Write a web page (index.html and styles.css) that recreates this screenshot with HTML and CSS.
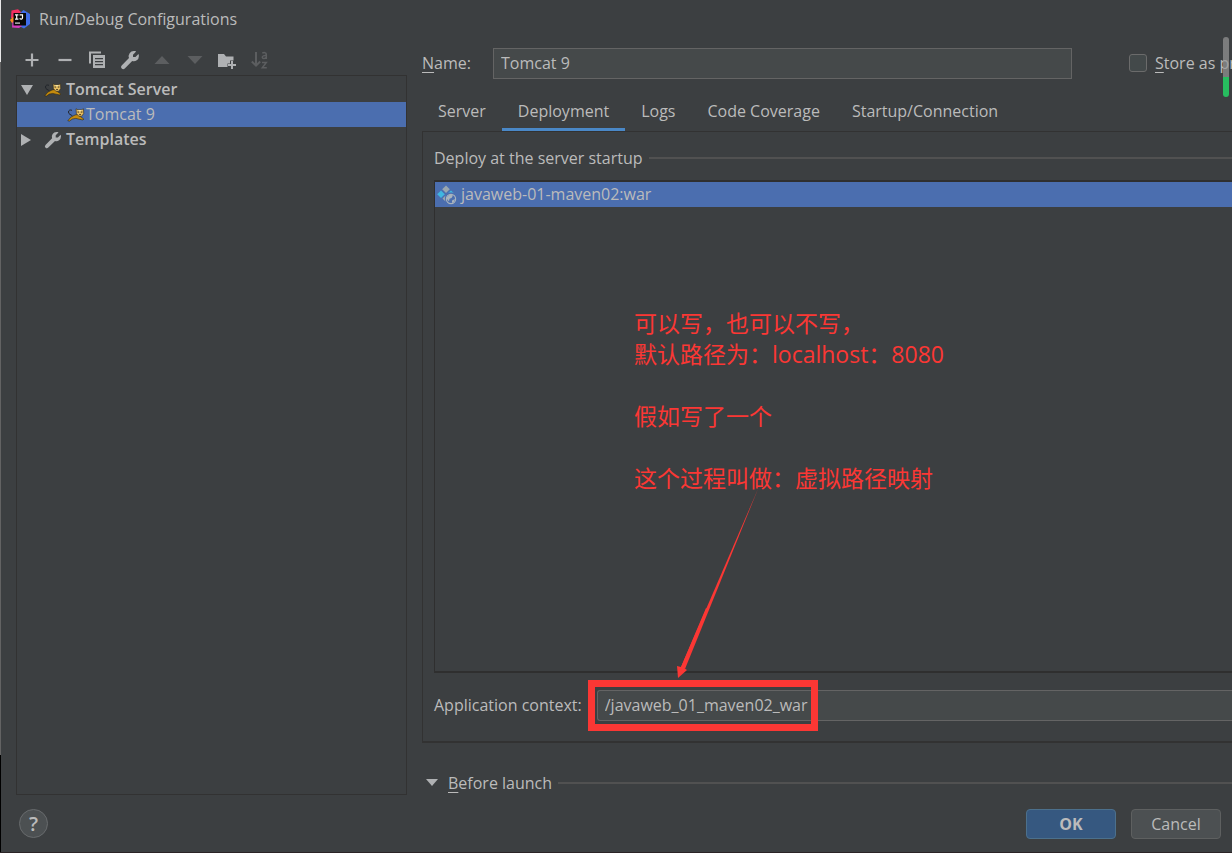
FILE: index.html
```
<!DOCTYPE html>
<html lang="en">
<head>
<meta charset="utf-8">
<title>Run/Debug Configurations</title>
<link rel="stylesheet" href="styles.css">
</head>
<body>
<svg class="defs" aria-hidden="true">
  <symbol id="wrench" viewBox="0 0 18 18">
    <path fill="currentColor" d="M12.500 1c1 0 1.400.1 2 .4L11.700 4.200v2.200h2.200l2.700-2.700c.4.700.4 1.300.4 1.900a4.600 4.600 0 0 1-6 4.300L4.300 16.600a1.900 1.900 0 0 1-2.800-2.700L8.100 7.200A4.600 4.600 0 0 1 12.500 1z"/>
  </symbol>
  <symbol id="cat" viewBox="0 0 18 14">
    <path d="M5.500 8C4 6.500 1.500 6.500 1.500 4 1.600 2.200 3 1.600 5 2.300" fill="none" stroke="#20242a" stroke-width="1"/>
    <path d="M.8 12.800l3-3.600L8 7l2.500-.5L14 9l2.800 2-.8 1-4-.8-3.200-.8-3.500.7-2.800 2z" fill="#c58b0c" stroke="#2f2817" stroke-width=".6"/>
    <path d="M9 .8l2 1h3.500l2-1 .2 4.700-2 2.700h-3L9.400 5.500z" fill="#e5bd60" stroke="#28231a" stroke-width=".6"/>
    <path d="M10.500 3.600h1.600v1h-1.600zM13.800 3.600h1.600v1h-1.600zM12.300 6h1.500v.9h-1.500z" fill="#352918"/>
    <path d="M11.300 2.200h3.200v1h-3.200z" fill="#fff0b4"/>
  </symbol>
</svg>
<div class="dialog">
  <header class="titlebar">
    <svg class="logo" viewBox="0 0 20 20" aria-hidden="true">
      <path d="M1.500 1.500L8 .3 12 4v5H1z" fill="#f52e62"/>
      <path d="M0 11l3-3 3 1v6l-4-1z" fill="#fb8a22"/>
      <path d="M10 4l3.500-3L20 5v10l-6 4.500-4-2z" fill="#3f6de8"/>
      <path d="M2.500 13L8 12l4 5-3 2-7-.5z" fill="#d43bc0"/>
      <path d="M3.500 4h12.500v12.500H3.500z" fill="#080808"/>
      <path d="M5 5.800h3.400M6.700 5.800v4.400M5 10.200h3.400M9.600 5.800h2.900v3c0 1.600-1.800 1.600-2.900.8" fill="none" stroke="#fff" stroke-width="1.200"/>
      <path d="M5 13.500h5v1.200H5z" fill="#ddd"/>
    </svg>
    <h1 class="title">Run/Debug Configurations</h1>
  </header>
  <main class="content">
    <section class="sidebar">
      <div class="toolbar">
        <button class="tool" aria-label="Add"><svg viewBox="0 0 20 20"><path d="M10 3.500v13M3.500 10h13" stroke="currentColor" stroke-width="2.200"/></svg></button>
        <button class="tool" aria-label="Remove"><svg viewBox="0 0 20 20"><path d="M3.500 10h13" stroke="currentColor" stroke-width="2.200"/></svg></button>
        <button class="tool" aria-label="Copy"><svg viewBox="0 0 20 20"><path d="M3 13.500V2.500h11" fill="none" stroke="currentColor" stroke-width="2"/><path fill="currentColor" fill-rule="evenodd" d="M6 5h12v13H6zM8 8v1.200h8V8zM8 11v1.200h8V11zM8 14v1.200h8V14z"/></svg></button>
        <button class="tool" aria-label="Edit templates"><svg viewBox="0 0 18 18"><use href="#wrench"/></svg></button>
        <button class="tool" aria-label="Move up" disabled><svg viewBox="0 0 20 20"><path fill="currentColor" d="M2.500 14L10 6l7.500 8z"/></svg></button>
        <button class="tool" aria-label="Move down" disabled><svg viewBox="0 0 20 20"><path fill="currentColor" d="M2.500 6h15L10 14z"/></svg></button>
        <button class="tool" aria-label="Create folder"><svg viewBox="0 0 20 20"><path fill="currentColor" d="M1 4h6l2 2.500h7.500v4H13v3h-2.500V17H1z"/><path d="M15 11v8M11 15h8" stroke="currentColor" stroke-width="2"/></svg></button>
        <button class="tool" aria-label="Sort configurations" disabled><svg viewBox="0 0 20 20"><path d="M6 2v13M1.800 11.500L6 15.700l4.200-4.200" fill="none" stroke="currentColor" stroke-width="2"/><path d="M12.300 3.200c1.500-1 4-.8 4 1V9M16.300 5.700c-2-.3-4.200.2-4 1.800.2 1.600 3.200 1.300 4-.3M12 12.500h4.300l-4 5.200h4.500" fill="none" stroke="currentColor" stroke-width="1.500"/></svg></button>
      </div>
      <ul class="tree">
        <li class="node group"><svg class="twisty" viewBox="0 0 12 12"><path d="M0 1h12L6 11z" fill="currentColor"/></svg><svg class="cat"><use href="#cat"/></svg>Tomcat Server</li>
        <li class="node leaf"><svg class="cat"><use href="#cat"/></svg>Tomcat 9</li>
        <li class="node group"><svg class="twisty" viewBox="0 0 12 12"><path d="M0 0l10 6-10 6z" fill="currentColor"/></svg><svg class="node-wrench"><use href="#wrench"/></svg>Templates</li>
      </ul>
    </section>
    <section class="settings">
      <div class="name-row">
        <label class="name-label" for="name"><u>N</u>ame:</label>
        <input class="field name-field" id="name" type="text" value="Tomcat 9">
        <div class="store"><input class="check" id="store" type="checkbox"><label for="store"><u>S</u>tore as pr</label></div>
      </div>
      <nav class="tabs">
        <button class="tab">Server</button>
        <button class="tab active">Deployment</button>
        <button class="tab">Logs</button>
        <button class="tab">Code Coverage</button>
        <button class="tab">Startup/Connection</button>
      </nav>
      <div class="panel">
        <div class="heading"><span>Deploy at the server startup</span></div>
        <div class="artifacts">
          <div class="artifact">
            <svg class="artifact-icon" viewBox="0 0 20 20" aria-hidden="true">
              <path d="M9 .5l3.800 3.800L9 8 5.200 4.300z" fill="#9aa7b0"/>
              <path d="M4 5.500l3.800 3.800L4 13 .2 9.300z" fill="#40b6e0"/>
              <path d="M11 8l3-2.500L16.800 8c-2-.6-4-.6-5.800 0z" fill="#40b6e0"/>
              <path d="M8.500 10.500L5.500 13.500l3 3c-.7-2-.7-4 0-6z" fill="#9aa7b0"/>
              <circle cx="14" cy="14" r="4.600" fill="none" stroke="#a9b3bd" stroke-width="1.200"/>
              <path d="M10 12l3-2.500 3 1-1.500 2.500-2 .7-.5 2.800-2-2.500zM15 15.500l3-1.500-1 3-2 1z" fill="#a9b3bd"/>
            </svg>
            javaweb-01-maven02:war
          </div>
          <p class="note" lang="zh-CN">可以写，也可以不写，<br>默认路径为：localhost：8080<br><br>假如写了一个<br><br>这个过程叫做：虚拟路径映射</p>
          <svg class="arrow" viewBox="0 0 84 190" aria-hidden="true"><path d="M82 0L9 180l-4-2z" fill="#fb3734"/><path d="M2 189L1 177l4 1L30 119l2 1L8 179l3 2z" fill="#fb3734"/></svg>
        </div>
        <div class="context-row">
          <label for="context">Application context:</label>
          <div class="context-box"><input class="field context-field" id="context" type="text" value="/javaweb_01_maven02_war"></div>
        </div>
      </div>
      <div class="heading launch">
        <svg class="launch-arrow" viewBox="0 0 12 7"><path d="M0 0h12L6 7z" fill="currentColor"/></svg>
        <span><u>B</u>efore launch</span>
      </div>
    </section>
  </main>
  <footer class="footer">
    <button class="help" aria-label="Help">?</button>
    <div class="actions"><button class="button primary">OK</button><button class="button">Cancel</button></div>
  </footer>
  <div class="scroll"></div>
</div>
</body>
</html>
```
FILE: styles.css
```
*, *::before, *::after { box-sizing: border-box; }
body {
  margin: 0;
  background: #3c3f41;
  color: #bbbbbb;
  font: 16px/24px "Open Sans", "Noto Sans CJK SC", sans-serif;
}
button, input { font: inherit; color: inherit; }
button { padding: 0; border: 0; background: none; }
u { text-underline-offset: 3px; text-decoration-thickness: 1px; }
.defs { display: none; }
.dialog {
  position: relative;
  display: flex;
  flex-direction: column;
  min-height: 100vh;
  padding-left: 1px;
  border-bottom: 1px solid #2b2426;
  overflow: hidden;
  background: linear-gradient(#e8e8e8 0 62px, #636363 62px 755px, #000 755px) left / 1px 100% no-repeat;
}
.titlebar { display: flex; align-items: center; gap: 9px; height: 37px; padding-left: 9px; }
.logo { width: 20px; height: 20px; }
.title { margin: 0; font-size: 16px; font-weight: 400; }
.content { flex: 1; display: grid; grid-template-columns: 391px minmax(0, 1fr); gap: 15px; padding-left: 15px; }
.sidebar { display: flex; flex-direction: column; }
.toolbar { display: flex; align-items: center; justify-content: space-between; width: 254px; height: 38px; padding: 8px 0 0 6px; }
.tool { width: 20px; height: 20px; color: #afb1b3; }
.tool svg { display: block; width: 100%; height: 100%; }
.tool:disabled { color: #5c5e60; }
.tree { flex: 1; margin: 0; padding: 1px 0; border: 1px solid #323232; list-style: none; }
.node { display: flex; align-items: center; height: 25px; line-height: 23px; }
.group { padding-left: 4px; font-weight: 600; }
.leaf { padding-left: 50px; background: #4b6eaf; }
.twisty { width: 12px; height: 12px; margin-right: 11px; color: #afb1b3; }
.cat { width: 18px; height: 14px; margin-right: 4px; }
.leaf .cat { margin-right: 1px; }
.node-wrench { width: 18px; height: 18px; margin-right: 4px; color: #afb1b3; }
.settings { display: flex; flex-direction: column; }
.name-row { display: flex; align-items: center; height: 52px; }
.name-label { width: 71px; }
.field { height: 31px; padding: 0 7px; border: 1px solid #646464; background: #45494a; outline: 0; }
.name-field { flex: 1; min-width: 0; margin-right: 57px; }
.store { display: flex; align-items: center; gap: 8px; width: 103px; overflow: hidden; white-space: nowrap; }
.check { appearance: none; flex: none; width: 18px; height: 18px; margin: 0; border: 1px solid #6b6b6b; border-radius: 3px; background: #43494a; }
.tabs { display: flex; height: 42px; }
.tab { padding: 4px 16px 0; border-bottom: 3px solid transparent; }
.active { border-color: #4a88c7; }
.panel { flex: 1; display: flex; flex-direction: column; padding-left: 11px; border: solid #323232; border-width: 1px 0 2px 1px; }
.heading { display: flex; align-items: center; gap: 6px; height: 48px; padding-top: 4px; }
.heading::after { content: ""; flex: 1; height: 2px; background: #515151; }
.artifacts { position: relative; flex: 1; border: solid #2f2f2f; border-width: 2px 0 2px 1px; }
.artifact { display: flex; align-items: center; gap: 4px; height: 25px; padding-left: 2px; line-height: 23px; background: #4b6eaf; }
.artifact-icon { width: 20px; height: 20px; }
.note { position: absolute; top: 126px; left: 199px; margin: 0; color: #fb3734; font: 23px/31px "Open Sans", "Noto Sans CJK SC", sans-serif; white-space: nowrap; }
.arrow { position: absolute; top: 307px; left: 241px; width: 84px; height: 190px; }
.context-row { display: flex; align-items: center; gap: 15px; height: 68px; padding-bottom: 4px; }
.context-box { position: relative; flex: 1; }
.context-box::after { content: ""; position: absolute; top: -10px; left: -9px; width: 230px; height: 51px; border: 7px solid #fb3734; pointer-events: none; }
.context-field { display: block; width: 100%; border-right: 0; border-radius: 3px 0 0 3px; }
.launch { height: 52px; padding: 27px 0 0 4px; }
.launch-arrow { width: 12px; height: 7px; margin-right: 4px; color: #afb1b3; }
.footer { display: flex; align-items: center; justify-content: space-between; height: 57px; padding: 0 11px 0 18px; }
.help { width: 29px; height: 29px; border: 1px solid #686b6d; border-radius: 50%; background: #4c5052; font-size: 20px; font-weight: 600; }
.actions { display: flex; gap: 15px; }
.button { width: 90px; height: 30px; border: 1px solid #5e6060; border-radius: 4px; background: #4c5052; }
.primary { border-color: #4c708c; background: #365880; font-weight: 700; }
.scroll { position: absolute; top: 37px; right: 3px; width: 6px; height: 60px; border-radius: 3px; background: linear-gradient(rgba(150, 150, 150, .7) 0 40px, #27bd5f 40px); }
```
